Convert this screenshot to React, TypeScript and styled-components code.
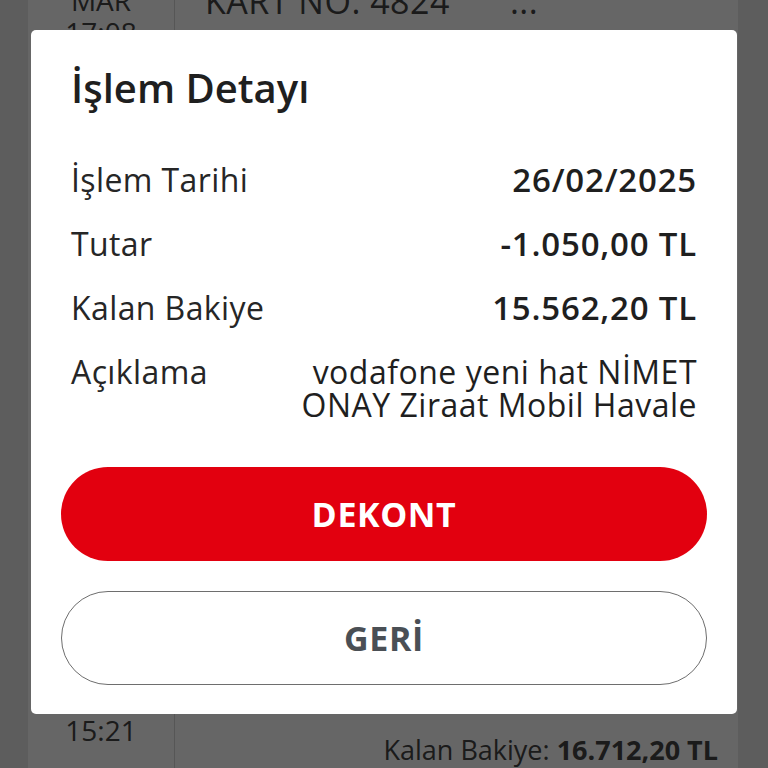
import * as React from 'react'
import styled, { createGlobalStyle } from 'styled-components'

const GlobalStyle = createGlobalStyle`
  html, body {
    margin: 0;
    padding: 0;
    height: 100%;
    overflow: hidden;
  }
  body {
    background: #e8e8e8;
    font-family: 'Open Sans', 'Liberation Sans', sans-serif;
    color: #444;
  }
`

const Page = styled.div`
  height: 768px;
  padding: 0 30px 0 28px;
  box-sizing: border-box;
`

const List = styled.div`
  background: #fff;
  height: 100%;
  display: flex;
  flex-direction: column;
  justify-content: space-between;
`

const Row = styled.div<{ $top?: boolean }>`
  display: grid;
  grid-template-columns: 147px 1fr;
  margin-top: ${p => (p.$top ? '-16px' : '0')};
`

const DateCol = styled.div`
  border-right: 1px solid #d8d8d8;
  text-align: center;
  font-size: 28px;
  line-height: 32px;
  padding: 0 0 22px;
`

const Desc = styled.div<{ $right?: boolean }>`
  padding: ${p => (p.$right ? '19px 20px 0 0' : '0 0 0 30px')};
  text-align: ${p => (p.$right ? 'right' : 'left')};
  font-size: ${p => (p.$right ? '27px' : '34px')};
  line-height: 34px;
  letter-spacing: ${p => (p.$right ? '0' : '0.5px')};

  b {
    font-weight: 700;
  }
`

const Dots = styled.span`
  margin-left: 60px;
`

const Overlay = styled.div`
  position: fixed;
  inset: 0;
  background: rgba(0, 0, 0, 0.6);
  display: flex;
  justify-content: center;
  align-items: flex-start;
  padding-top: 30px;
`

const Modal = styled.div`
  width: 706px;
  background: #fff;
  border-radius: 5px;
  padding: 26px 40px 29px;
  box-sizing: border-box;
  color: #1f1f1f;
`

const Title = styled.h1`
  margin: 0 0 43px;
  font-size: 40px;
  font-weight: 600;
  line-height: 64px;
  letter-spacing: 0;
`

const Details = styled.div`
  display: flex;
  flex-direction: column;
  gap: 31px;
  margin-bottom: 46px;
`

const DetailRow = styled.div`
  display: flex;
  justify-content: space-between;
  align-items: flex-start;
  gap: 24px;
  font-size: 32px;
  line-height: 33px;
  letter-spacing: 0.4px;
`

const Label = styled.span`
  color: #262626;
  white-space: nowrap;
`

const Value = styled.span<{ $bold?: boolean }>`
  text-align: right;
  font-weight: ${p => (p.$bold ? 600 : 400)};
  font-size: ${p => (p.$bold ? '33px' : '32px')};
  letter-spacing: ${p => (p.$bold ? '0.8px' : '0.5px')};
  max-width: 410px;
  color: #1f1f1f;
`

const Actions = styled.div`
  display: flex;
  flex-direction: column;
  gap: 30px;
  margin: 0 -10px;
`

const Button = styled.button<{ $primary?: boolean }>`
  height: 94px;
  border-radius: 47px;
  font-family: 'Open Sans', 'Liberation Sans', sans-serif;
  font-size: 34px;
  font-weight: 700;
  letter-spacing: 0.6px;
  cursor: pointer;
  background: ${p => (p.$primary ? '#e2000f' : '#fff')};
  color: ${p => (p.$primary ? '#fff' : '#4a4f55')};
  border: ${p => (p.$primary ? 'none' : '1.5px solid #6e6e6e')};
`

const details = [
  { label: 'İşlem Tarihi', value: '26/02/2025', bold: true },
  { label: 'Tutar', value: '-1.050,00 TL', bold: true },
  { label: 'Kalan Bakiye', value: '15.562,20 TL', bold: true },
  { label: 'Açıklama', value: 'vodafone yeni hat NİMET ONAY Ziraat Mobil Havale', bold: false },
]

export default function App() {
  return (
    <>
      <GlobalStyle />
      <Page>
        <List>
          <Row $top>
            <DateCol>
              MAR
              <br />
              17:08
            </DateCol>
            <Desc>
              KART NO. 4824<Dots>...</Dots>
            </Desc>
          </Row>
          <Row>
            <DateCol>15:21</DateCol>
            <Desc $right>
              Kalan Bakiye: <b>16.712,20 TL</b>
            </Desc>
          </Row>
        </List>
      </Page>
      <Overlay>
        <Modal>
          <Title>İşlem Detayı</Title>
          <Details>
            {details.map(d => (
              <DetailRow key={d.label}>
                <Label>{d.label}</Label>
                <Value $bold={d.bold}>{d.value}</Value>
              </DetailRow>
            ))}
          </Details>
          <Actions>
            <Button $primary>DEKONT</Button>
            <Button>GERİ</Button>
          </Actions>
        </Modal>
      </Overlay>
    </>
  )
}
